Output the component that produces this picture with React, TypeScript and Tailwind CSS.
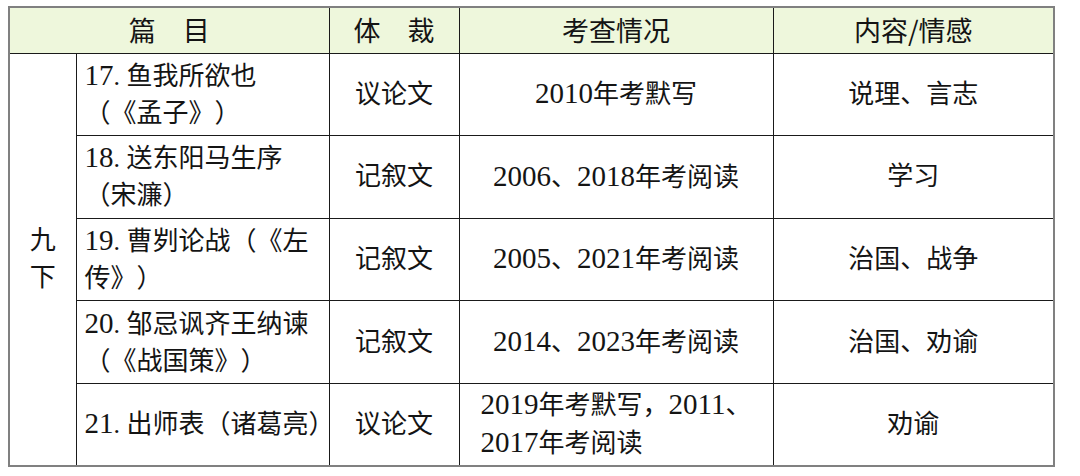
import React from "react";

const rows = [
  {
    title: ["17. 鱼我所欲也", "（《孟子》）"],
    genre: "议论文",
    exam: ["2010年考默写"],
    theme: "说理、言志",
  },
  {
    title: ["18. 送东阳马生序", "（宋濂）"],
    genre: "记叙文",
    exam: ["2006、2018年考阅读"],
    theme: "学习",
  },
  {
    title: ["19. 曹刿论战（《左", "传》）"],
    genre: "记叙文",
    exam: ["2005、2021年考阅读"],
    theme: "治国、战争",
  },
  {
    title: ["20. 邹忌讽齐王纳谏", "（《战国策》）"],
    genre: "记叙文",
    exam: ["2014、2023年考阅读"],
    theme: "治国、劝谕",
  },
  {
    title: ["21. 出师表（诸葛亮）"],
    genre: "议论文",
    exam: ["2019年考默写，2011、", "2017年考阅读"],
    theme: "劝谕",
  },
];

const serif = "font-['Liberation_Serif','Noto_Sans_CJK_SC',serif]";
const sans = "font-['Noto_Sans_CJK_SC',sans-serif]";
const cell = "border border-[#1a1a1a] align-middle";

// digits in the source are tall and a bit wide, so bump them up
function Line({ text }: { text: string }) {
  const parts = text.split(/(\d+)/);
  return (
    <div>
      {parts.map((p, i) =>
        /^\d+$/.test(p) ? (
          <span key={i} className="text-[29px]">
            {p}
          </span>
        ) : (
          <span key={i}>{p}</span>
        )
      )}
    </div>
  );
}

export default function App() {
  return (
    <div className="w-[1080px] h-[476px] bg-white pt-[6px] pl-[8px]">
      <table className="w-[1045px] table-fixed border-collapse border-2 border-[#808080] text-[#141414] text-[26px] [text-spacing-trim:space-all]">
        <colgroup>
          <col className="w-[67px]" />
          <col className="w-[253px]" />
          <col className="w-[130px]" />
          <col className="w-[314px]" />
          <col className="w-[281px]" />
        </colgroup>
        <thead>
          <tr className={`h-[46px] bg-[#eef7dc] ${sans} leading-[30px] text-[27px]`}>
            <th colSpan={2} className={`${cell} font-normal text-center`}>
              篇　目
            </th>
            <th className={`${cell} font-normal text-center`}>体　裁</th>
            <th className={`${cell} font-normal text-center`}>考查情况</th>
            <th className={`${cell} font-normal text-center`}>内容/情感</th>
          </tr>
        </thead>
        <tbody className={serif}>
          {rows.map((row, i) => (
            <tr key={i} className="h-[82.6px]">
              {i === 0 && (
                <td
                  rowSpan={rows.length}
                  className={`${cell} text-center leading-[37px]`}
                >
                  九
                  <br />
                  下
                </td>
              )}
              <td className={`${cell} pl-[8px] pr-0 leading-[37px] whitespace-nowrap`}>
                {row.title.map((line, j) => (
                  <Line key={j} text={line} />
                ))}
              </td>
              <td className={`${cell} text-center`}>{row.genre}</td>
              <td className={`${cell} text-center leading-[37px]`}>
                <div className="inline-block text-left whitespace-nowrap">
                  {row.exam.map((line, j) => (
                    <Line key={j} text={line} />
                  ))}
                </div>
              </td>
              <td className={`${cell} text-center`}>{row.theme}</td>
            </tr>
          ))}
        </tbody>
      </table>
    </div>
  );
}
